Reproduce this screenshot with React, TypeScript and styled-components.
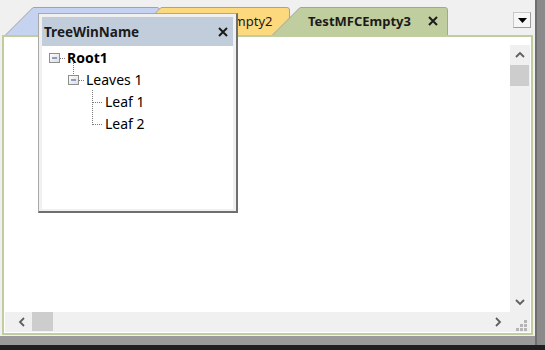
import * as React from 'react';
import styled, { createGlobalStyle } from 'styled-components';

const GlobalStyle = createGlobalStyle`
  html, body { margin: 0; padding: 0; background: #f0f0f0; }
  body { font-family: "Noto Sans", "Open Sans", sans-serif; }
  * { box-sizing: border-box; }
`;

const ACTIVE = '#c0cd9f';

interface TabDef {
  label: string;
  color: string;
  width: number;
  overlap: number;
  pad: number;
  active?: boolean;
}

// first tab's caption sits under the floating tree window, so it is left blank
const tabs: TabDef[] = [
  { label: '', color: '#c6d3f0', width: 155, overlap: 0, pad: 40 },
  { label: 'TestMFCEmpty2', color: '#fdd97e', width: 157, overlap: 27, pad: 42 },
  { label: 'TestMFCEmpty3', color: ACTIVE, width: 176, overlap: 18, pad: 36, active: true },
];

interface NodeDef {
  label: string;
  level: number;
  bold?: boolean;
  box?: boolean;
  upLine?: boolean;
  last?: boolean;
}

const nodes: NodeDef[] = [
  { label: 'Root1', level: 0, bold: true, box: true },
  { label: 'Leaves 1', level: 1, box: true, upLine: true },
  { label: 'Leaf 1', level: 2 },
  { label: 'Leaf 2', level: 2, last: true },
];

const CloseIcon = ({ size = 10 }: { size?: number }) => (
  <svg width={size} height={size} viewBox="0 0 10 10">
    <path d="M1 1 L9 9 M9 1 L1 9" stroke="#1c1c1c" strokeWidth="2" />
  </svg>
);

const Chevron = ({ dir }: { dir: 'up' | 'down' | 'left' | 'right' }) => {
  const d = {
    up: 'M1 6 L5 2 L9 6',
    down: 'M1 2 L5 6 L9 2',
    left: 'M6 1 L2 5 L6 9',
    right: 'M2 1 L6 5 L2 9',
  }[dir];
  const vertical = dir === 'up' || dir === 'down';
  return (
    <svg width={vertical ? 10 : 8} height={vertical ? 8 : 10} viewBox={vertical ? '0 0 10 8' : '0 0 8 10'}>
      <path d={d} stroke="#5f5f5f" strokeWidth="1.8" fill="none" />
    </svg>
  );
};

const Connector = ({ node }: { node: NodeDef }) => (
  <svg width="18" height="22" style={{ overflow: 'visible', flexShrink: 0 }}>
    {node.upLine && (
      <line x1="5.5" y1="-5" x2="5.5" y2="7" stroke="#7a7a7a" strokeDasharray="1 1" />
    )}
    {node.box ? (
      <>
        <defs>
          <linearGradient id="boxfill" x1="0" y1="0" x2="1" y2="1">
            <stop offset="0" stopColor="#ffffff" />
            <stop offset="1" stopColor="#dcdcdc" />
          </linearGradient>
        </defs>
        <rect x="0.5" y="7.5" width="10" height="9" fill="url(#boxfill)" stroke="#8e8e8e" />
        <line x1="3" y1="12" x2="8" y2="12" stroke="#2d4f9c" />
        <line x1="11" y1="12.5" x2="17" y2="12.5" stroke="#7a7a7a" strokeDasharray="1 1" />
      </>
    ) : (
      <>
        <line x1="5.5" y1="0" x2="5.5" y2={node.last ? 13 : 22} stroke="#7a7a7a" strokeDasharray="1 1" />
        <line x1="6" y1="12.5" x2="15" y2="12.5" stroke="#7a7a7a" strokeDasharray="1 1" />
      </>
    )}
  </svg>
);

export default function App() {
  return (
    <>
      <GlobalStyle />
      <Screen>
        <Desk>
          <Window>
            <TabStrip>
              {tabs.map((t, i) => (
                <Tab key={i} $w={t.width} $overlap={t.overlap}>
                  <TabShape width={t.width} height={28}>
                    <path
                      d={`M0.5 28 L27.5 1 Q28 0.5 29 0.5 L${t.width - 3} 0.5 Q${t.width - 0.5} 0.5 ${t.width - 0.5} 3 L${t.width - 0.5} 28`}
                      fill={t.color}
                      stroke="#a3a3a3"
                    />
                  </TabShape>
                  {t.label && (
                    <TabLabel $active={t.active} $pad={t.pad}>
                      {t.label}
                    </TabLabel>
                  )}
                  {t.active && (
                    <TabClose>
                      <CloseIcon />
                    </TabClose>
                  )}
                </Tab>
              ))}
              <DropButton>
                <svg width="9" height="5" viewBox="0 0 9 5">
                  <path d="M0 0 L9 0 L4.5 5 Z" fill="#000" />
                </svg>
              </DropButton>
            </TabStrip>
            <Frame>
              <View />
              <VScroll>
                <ArrowButton>
                  <Chevron dir="up" />
                </ArrowButton>
                <VThumb />
                <Spacer />
                <ArrowButton>
                  <Chevron dir="down" />
                </ArrowButton>
              </VScroll>
              <HScroll>
                <ArrowButton>
                  <Chevron dir="left" />
                </ArrowButton>
                <HThumb />
                <Spacer />
                <ArrowButton>
                  <Chevron dir="right" />
                </ArrowButton>
              </HScroll>
              <Corner>
                <svg width="11" height="11" viewBox="0 0 11 11">
                  <rect x="8" y="0" width="3" height="3" fill="#b5b5b5" />
                  <rect x="4" y="4" width="3" height="3" fill="#b5b5b5" />
                  <rect x="8" y="4" width="3" height="3" fill="#b5b5b5" />
                  <rect x="0" y="8" width="3" height="3" fill="#b5b5b5" />
                  <rect x="4" y="8" width="3" height="3" fill="#b5b5b5" />
                  <rect x="8" y="8" width="3" height="3" fill="#b5b5b5" />
                </svg>
              </Corner>
            </Frame>
            <TreeWin>
              <TitleBar>
                <TitleText>TreeWinName</TitleText>
                <CloseIcon />
              </TitleBar>
              <TreeBody>
                {nodes.map((n) => (
                  <TreeRow key={n.label} $level={n.level}>
                    <Connector node={n} />
                    <NodeLabel $bold={n.bold}>{n.label}</NodeLabel>
                  </TreeRow>
                ))}
              </TreeBody>
            </TreeWin>
          </Window>
          <EdgeStrip />
        </Desk>
      </Screen>
    </>
  );
}

const Screen = styled.div`
  width: 545px;
  height: 350px;
  display: flex;
  flex-direction: column;
  overflow: hidden;
  background: #1f1f1f;
`;

const Desk = styled.div`
  height: 345px;
  display: flex;
  background: #9a9a9a;
`;

const Window = styled.div`
  position: relative;
  width: 535px;
  height: 336px;
  flex-shrink: 0;
  background: #f0f0f0;
  display: flex;
  flex-direction: column;
`;

const EdgeStrip = styled.div`
  flex: 1;
  background: #8a8a8a;
  border-left: 2px solid #6e6e6e;
`;

const TabStrip = styled.div`
  height: 35px;
  flex-shrink: 0;
  display: flex;
  align-items: flex-end;
  padding-left: 5px;
`;

const Tab = styled.div<{ $w: number; $overlap: number }>`
  position: relative;
  width: ${({ $w }) => $w}px;
  margin-left: ${({ $overlap }) => -$overlap}px;
  height: 28px;
  flex-shrink: 0;
  display: flex;
  align-items: center;
  font-size: 13px;
  color: #1a1a1a;
`;

const TabShape = styled.svg`
  position: absolute;
  left: 0;
  top: 0;
`;

const TabLabel = styled.span<{ $active?: boolean; $pad: number }>`
  position: relative;
  padding-left: ${({ $pad }) => $pad}px;
  font-weight: ${({ $active }) => ($active ? 700 : 400)};
  white-space: nowrap;
`;

const TabClose = styled.span`
  position: relative;
  display: flex;
  margin-left: auto;
  margin-right: 10px;
`;

const DropButton = styled.div`
  margin-left: auto;
  margin-right: 4px;
  margin-bottom: 7px;
  width: 18px;
  height: 16px;
  border: 1px solid;
  border-color: #c8c8c8 #9c9c9c #9c9c9c #c8c8c8;
  background: #f6f6f6;
  display: flex;
  align-items: center;
  justify-content: center;
`;

const Frame = styled.div`
  margin: 0 2px 1px 2px;
  flex: 1;
  border: 2px solid ${ACTIVE};
  padding: 1px;
  background: #ffffff;
  display: grid;
  grid-template-columns: 1fr 20px;
  grid-template-rows: 1fr 20px;
`;

const View = styled.div`
  background: #ffffff;
`;

const VScroll = styled.div`
  display: flex;
  flex-direction: column;
  background: #f0f0f0;
  border-top: 7px solid #ffffff;
`;

const HScroll = styled.div`
  display: flex;
  background: #f0f0f0;
  padding-left: 7px;
  padding-right: 2px;
`;

const ArrowButton = styled.div`
  width: 20px;
  height: 20px;
  flex-shrink: 0;
  display: flex;
  align-items: center;
  justify-content: center;
`;

const VThumb = styled.div`
  height: 21px;
  margin: 0 1px 0 0;
  background: #cdcdcd;
`;

const HThumb = styled.div`
  width: 21px;
  margin-bottom: 1px;
  background: #cdcdcd;
`;

const Spacer = styled.div`
  flex: 1;
`;

const Corner = styled.div`
  background: #f0f0f0;
  display: flex;
  align-items: flex-end;
  justify-content: flex-end;
  padding: 0 3px 1px 0;
`;

const TreeWin = styled.div`
  position: absolute;
  left: 38px;
  top: 13px;
  width: 200px;
  height: 200px;
  z-index: 5;
  display: flex;
  flex-direction: column;
  background: #f0f0f0;
  border-left: 1px solid #a8a8a8;
  border-top: 1px solid #a8a8a8;
  border-right: 2px solid #6f6f6f;
  border-bottom: 2px solid #6f6f6f;
  padding: 3px 3px 2px 3px;
`;

const TitleBar = styled.div`
  height: 29px;
  flex-shrink: 0;
  display: flex;
  align-items: center;
  justify-content: space-between;
  background: #c1cddb;
  padding: 0 5px 0 2px;
`;

const TitleText = styled.span`
  font-size: 13.5px;
  font-weight: 700;
  color: #1c1c1c;
`;

const TreeBody = styled.div`
  flex: 1;
  background: #ffffff;
  display: flex;
  flex-direction: column;
`;

const TreeRow = styled.div<{ $level: number }>`
  height: 22px;
  display: flex;
  align-items: center;
  padding-left: ${({ $level }) => 7 + $level * 19}px;
`;

const NodeLabel = styled.span<{ $bold?: boolean }>`
  font-size: 14px;
  font-weight: ${({ $bold }) => ($bold ? 700 : 400)};
  color: #000;
  white-space: nowrap;
`;
